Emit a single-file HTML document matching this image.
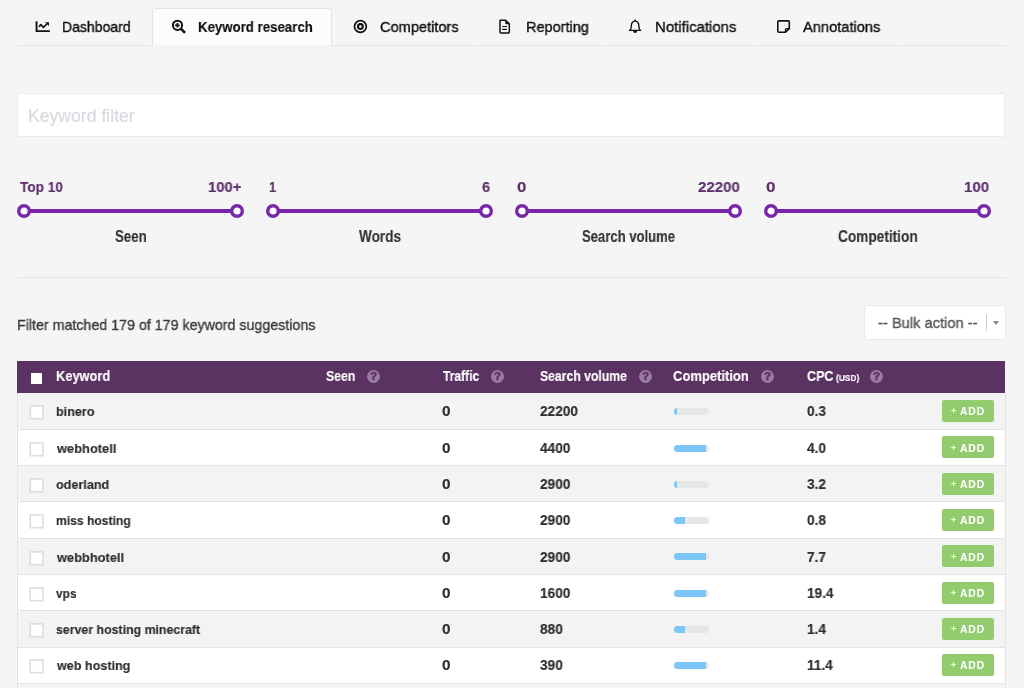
<!DOCTYPE html>
<html><head><meta charset="utf-8"><style>
*{margin:0;padding:0;box-sizing:content-box}
html,body{width:1024px;height:688px;overflow:hidden;background:#f5f5f5;font-family:"Liberation Sans",sans-serif}
.abs{position:absolute}
.t{position:absolute;white-space:nowrap;transform-origin:0 0;will-change:transform}
.tabact{position:absolute;left:152px;top:8px;width:178px;height:36px;background:#fcfcfc;border:1px solid #e6e3e8;border-bottom:none;border-radius:3px 3px 0 0}
.knob{width:7px;height:7px;border:3.5px solid #7628a8;border-radius:50%;background:#fff}
.q{width:13px;height:13px;border-radius:50%;background:#9a7ba1;color:#5b3363;font:bold 11px/13px "Liberation Sans",sans-serif;text-align:center;will-change:transform;-webkit-text-stroke:0.6px #5b3363}
.cb{width:12px;height:12px;border:1px solid #dcdadd;background:#fff}
.bar{width:35.5px;height:7px;border-radius:3.5px;background:#e6e6e6;overflow:hidden}
.bar div{height:7px;background:#7cc5f7}
.add{width:52px;height:22px;border-radius:2px;background:#92cc6e}
</style></head>
<body>
<div class="tabact"></div>
<div class="abs" style="left:17px;top:45px;width:131px;height:1px;background:#e6e3e8"></div>
<div class="abs" style="left:149px;top:45px;width:4px;height:1px;background:#e6e3e8"></div>
<div class="abs" style="left:331px;top:45px;width:145px;height:1px;background:#e6e3e8"></div>
<div class="abs" style="left:477px;top:45px;width:128px;height:1px;background:#e6e3e8"></div>
<div class="abs" style="left:606px;top:45px;width:148px;height:1px;background:#e6e3e8"></div>
<div class="abs" style="left:755px;top:45px;width:142px;height:1px;background:#e6e3e8"></div>
<div class="abs" style="left:898px;top:45px;width:108px;height:1px;background:#e6e3e8"></div>
<div class="t" style="left:62.05px;top:19px;font-size:15.12px;line-height:15.12px;font-weight:400;color:#0e0e0e;transform:scaleX(0.9283);-webkit-text-stroke:0.35px #0e0e0e;">Dashboard</div>
<div class="t" style="left:198.03px;top:19px;font-size:15.12px;line-height:15.12px;font-weight:700;color:#0e0e0e;transform:scaleX(0.8759);-webkit-text-stroke:0.15px #0e0e0e;">Keyword research</div>
<div class="t" style="left:379.77px;top:19px;font-size:15.12px;line-height:15.12px;font-weight:400;color:#0e0e0e;transform:scaleX(0.9654);-webkit-text-stroke:0.35px #0e0e0e;">Competitors</div>
<div class="t" style="left:525.51px;top:19px;font-size:15.12px;line-height:15.12px;font-weight:400;color:#0e0e0e;transform:scaleX(0.9599);-webkit-text-stroke:0.35px #0e0e0e;">Reporting</div>
<div class="t" style="left:654.77px;top:19px;font-size:15.12px;line-height:15.12px;font-weight:400;color:#0e0e0e;transform:scaleX(0.9896);-webkit-text-stroke:0.35px #0e0e0e;">Notifications</div>
<div class="t" style="left:802.97px;top:19px;font-size:15.12px;line-height:15.12px;font-weight:400;color:#0e0e0e;transform:scaleX(0.9688);-webkit-text-stroke:0.35px #0e0e0e;">Annotations</div>
<svg class="abs" style="left:35px;top:20px" width="16" height="14" viewBox="0 0 16 14">
<path d="M1.55 1.2 V11.1 H14.9" fill="none" stroke="#111" stroke-width="1.9"/>
<path d="M3.9 6.7 L5.8 4.6 L8.4 7.3 L11.8 4" fill="none" stroke="#111" stroke-width="1.7" stroke-linejoin="round"/>
<path d="M9.8 2.2 H14 V6.1 Z" fill="#111"/></svg>
<svg class="abs" style="left:171px;top:19px" width="16" height="16" viewBox="0 0 16 16">
<circle cx="6.5" cy="6.3" r="4.6" fill="none" stroke="#111" stroke-width="2"/>
<path d="M9.9 9.6 L14 13.8" stroke="#111" stroke-width="2.6" stroke-linecap="butt"/>
<path d="M6.4 4V8.6M4.1 6.3H8.7" stroke="#111" stroke-width="1.7"/></svg>
<svg class="abs" style="left:352px;top:19px" width="16" height="16" viewBox="0 0 16 16">
<circle cx="8.4" cy="7.5" r="5.9" fill="none" stroke="#111" stroke-width="1.7"/>
<circle cx="8.4" cy="7.5" r="2.4" fill="none" stroke="#111" stroke-width="2.1"/></svg>
<svg class="abs" style="left:497px;top:18px" width="16" height="17" viewBox="0 0 16 17">
<path d="M3 2.2 H8.6 L12.3 5.9 V14.1 Q12.3 15.1 11.3 15.1 H4 Q3 15.1 3 14.1 V3.2 Q3 2.2 4 2.2Z" fill="none" stroke="#111" stroke-width="1.5" stroke-linejoin="round"/>
<path d="M8.3 2.2 L12.3 6.2 H9.2 Q8.3 6.2 8.3 5.3Z" fill="#111"/>
<path d="M5.2 8.5H9.9M5.2 11.3H9.9" stroke="#111" stroke-width="1.2"/></svg>
<svg class="abs" style="left:627px;top:18px" width="16" height="17" viewBox="0 0 16 17">
<path d="M2.6 12.4 Q4.3 11.6 4.3 8.5 Q4.3 3.1 8.1 3.1 Q11.9 3.1 11.9 8.5 Q11.9 11.6 13.6 12.4 Z" fill="none" stroke="#111" stroke-width="1.4" stroke-linejoin="round"/>
<circle cx="8.1" cy="2.4" r="1" fill="#111"/>
<path d="M6.1 13.1 H10.1 A2 2 0 0 1 6.1 13.1Z" fill="#111"/></svg>
<svg class="abs" style="left:776px;top:19px" width="16" height="16" viewBox="0 0 16 16">
<path d="M2.9 1.9 H12.2 Q13.3 1.9 13.3 3 V9.6 L9.5 13.2 H2.9 Q1.8 13.2 1.8 12.1 V3 Q1.8 1.9 2.9 1.9Z" fill="none" stroke="#111" stroke-width="1.6" stroke-linejoin="round"/>
<path d="M13.3 9.6 H10.5 Q9.5 9.6 9.5 10.6 V13.2" fill="none" stroke="#111" stroke-width="1.4"/></svg>
<div class="abs" style="left:17px;top:93px;width:986px;height:42px;background:#fff;border:1px solid #ebe9ed;border-radius:2px"></div>
<div class="t" style="left:27.95px;top:108px;font-size:17.59px;line-height:17.59px;font-weight:400;color:#dbd8df;transform:scaleX(1.0021);-webkit-text-stroke:0.2px #dbd8df;">Keyword filter</div>
<div class="abs" style="left:24px;top:209px;width:213px;height:4px;background:#7628a8"></div>
<svg class="abs" style="left:17px;top:204px" width="14" height="14" viewBox="0 0 14 14"><circle cx="7" cy="7" r="5.3" fill="#fff" stroke="#7628a8" stroke-width="3.4"/></svg>
<svg class="abs" style="left:230px;top:204px" width="14" height="14" viewBox="0 0 14 14"><circle cx="7" cy="7" r="5.3" fill="#fff" stroke="#7628a8" stroke-width="3.4"/></svg>
<div class="abs" style="left:273px;top:209px;width:213px;height:4px;background:#7628a8"></div>
<svg class="abs" style="left:266px;top:204px" width="14" height="14" viewBox="0 0 14 14"><circle cx="7" cy="7" r="5.3" fill="#fff" stroke="#7628a8" stroke-width="3.4"/></svg>
<svg class="abs" style="left:479px;top:204px" width="14" height="14" viewBox="0 0 14 14"><circle cx="7" cy="7" r="5.3" fill="#fff" stroke="#7628a8" stroke-width="3.4"/></svg>
<div class="abs" style="left:522px;top:209px;width:213px;height:4px;background:#7628a8"></div>
<svg class="abs" style="left:515px;top:204px" width="14" height="14" viewBox="0 0 14 14"><circle cx="7" cy="7" r="5.3" fill="#fff" stroke="#7628a8" stroke-width="3.4"/></svg>
<svg class="abs" style="left:728px;top:204px" width="14" height="14" viewBox="0 0 14 14"><circle cx="7" cy="7" r="5.3" fill="#fff" stroke="#7628a8" stroke-width="3.4"/></svg>
<div class="abs" style="left:771px;top:209px;width:213px;height:4px;background:#7628a8"></div>
<svg class="abs" style="left:764px;top:204px" width="14" height="14" viewBox="0 0 14 14"><circle cx="7" cy="7" r="5.3" fill="#fff" stroke="#7628a8" stroke-width="3.4"/></svg>
<svg class="abs" style="left:977px;top:204px" width="14" height="14" viewBox="0 0 14 14"><circle cx="7" cy="7" r="5.3" fill="#fff" stroke="#7628a8" stroke-width="3.4"/></svg>
<div class="t" style="left:20.09px;top:179px;font-size:15.26px;line-height:15.26px;font-weight:700;color:#5c2f6a;transform:scaleX(0.8942);-webkit-text-stroke:0.15px #5c2f6a;">Top 10</div>
<div class="t" style="left:208.48px;top:179px;font-size:15.26px;line-height:15.26px;font-weight:700;color:#5c2f6a;transform:scaleX(0.9707);-webkit-text-stroke:0.15px #5c2f6a;">100+</div>
<div class="t" style="left:269.20px;top:179px;font-size:15.26px;line-height:15.26px;font-weight:700;color:#5c2f6a;transform:scaleX(0.8437);-webkit-text-stroke:0.15px #5c2f6a;">1</div>
<div class="t" style="left:482.48px;top:179px;font-size:15.26px;line-height:15.26px;font-weight:700;color:#5c2f6a;transform:scaleX(0.9477);-webkit-text-stroke:0.15px #5c2f6a;">6</div>
<div class="t" style="left:517.33px;top:179px;font-size:15.26px;line-height:15.26px;font-weight:700;color:#5c2f6a;transform:scaleX(1.1012);-webkit-text-stroke:0.15px #5c2f6a;">0</div>
<div class="t" style="left:698.24px;top:179px;font-size:15.26px;line-height:15.26px;font-weight:700;color:#5c2f6a;transform:scaleX(0.9843);-webkit-text-stroke:0.15px #5c2f6a;">22200</div>
<div class="t" style="left:766.22px;top:179px;font-size:15.26px;line-height:15.26px;font-weight:700;color:#5c2f6a;transform:scaleX(1.1150);-webkit-text-stroke:0.15px #5c2f6a;">0</div>
<div class="t" style="left:964.07px;top:179px;font-size:15.26px;line-height:15.26px;font-weight:700;color:#5c2f6a;transform:scaleX(0.9833);-webkit-text-stroke:0.15px #5c2f6a;">100</div>
<div class="t" style="left:114.90px;top:229px;font-size:15.84px;line-height:15.84px;font-weight:700;color:#333;transform:scaleX(0.8377);-webkit-text-stroke:0.15px #333;">Seen</div>
<div class="t" style="left:358.72px;top:229px;font-size:15.84px;line-height:15.84px;font-weight:700;color:#333;transform:scaleX(0.8578);-webkit-text-stroke:0.15px #333;">Words</div>
<div class="t" style="left:582.11px;top:229px;font-size:15.84px;line-height:15.84px;font-weight:700;color:#333;transform:scaleX(0.8259);-webkit-text-stroke:0.15px #333;">Search volume</div>
<div class="t" style="left:838.03px;top:229px;font-size:15.84px;line-height:15.84px;font-weight:700;color:#333;transform:scaleX(0.8628);-webkit-text-stroke:0.15px #333;">Competition</div>
<div class="abs" style="left:17px;top:277px;width:989px;height:1px;background:#e6e3e8"></div>
<div class="t" style="left:16.58px;top:318px;font-size:14.97px;line-height:14.97px;font-weight:400;color:#3a3a3a;transform:scaleX(0.9512);-webkit-text-stroke:0.35px #3a3a3a;">Filter matched 179 of 179 keyword suggestions</div>
<div class="abs" style="left:864px;top:305px;width:140px;height:33px;background:#fff;border:1px solid #ebe9ed;border-radius:3px"></div>
<div class="t" style="left:878.25px;top:316px;font-size:14.97px;line-height:14.97px;font-weight:400;color:#555;transform:scaleX(0.9805);-webkit-text-stroke:0.35px #555;">-- Bulk action --</div>
<div class="abs" style="left:986px;top:314px;width:1px;height:17px;background:#ccc"></div>
<div class="abs" style="left:993px;top:321px;width:0;height:0;border-left:3px solid transparent;border-right:3px solid transparent;border-top:4px solid #888"></div>
<div class="abs" style="left:17px;top:361px;width:988px;height:32px;background:#5b3363"></div>
<div class="abs" style="left:31px;top:373px;width:11px;height:11px;background:#fff"></div>
<div class="t" style="left:55.65px;top:369px;font-size:14.39px;line-height:14.39px;font-weight:700;color:#fff;transform:scaleX(0.8921);-webkit-text-stroke:0.15px #fff;">Keyword</div>
<div class="t" style="left:326.03px;top:369px;font-size:14.39px;line-height:14.39px;font-weight:700;color:#fff;transform:scaleX(0.8558);-webkit-text-stroke:0.15px #fff;">Seen</div>
<div class="t" style="left:442.76px;top:369px;font-size:14.39px;line-height:14.39px;font-weight:700;color:#fff;transform:scaleX(0.8387);-webkit-text-stroke:0.15px #fff;">Traffic</div>
<div class="t" style="left:539.88px;top:369px;font-size:14.39px;line-height:14.39px;font-weight:700;color:#fff;transform:scaleX(0.8492);-webkit-text-stroke:0.15px #fff;">Search volume</div>
<div class="t" style="left:673.15px;top:369px;font-size:14.39px;line-height:14.39px;font-weight:700;color:#fff;transform:scaleX(0.9039);-webkit-text-stroke:0.15px #fff;">Competition</div>
<div class="t" style="left:807.27px;top:369px;font-size:14.39px;line-height:14.39px;font-weight:700;color:#fff;transform:scaleX(0.8712);-webkit-text-stroke:0.15px #fff;">CPC</div>
<div class="t" style="left:836.38px;top:373px;font-size:9.59px;line-height:9.59px;font-weight:700;color:#fff;transform:scaleX(0.8719);-webkit-text-stroke:0.15px #fff;">(USD)</div>
<div class="abs q" style="left:367.4px;top:370px">?</div>
<div class="abs q" style="left:491.0px;top:370px">?</div>
<div class="abs q" style="left:639.0px;top:370px">?</div>
<div class="abs q" style="left:760.7px;top:370px">?</div>
<div class="abs q" style="left:870.4px;top:370px">?</div>
<div class="abs" style="left:17px;top:393.30px;width:989px;height:36.28px;background:#f3f3f4"></div>
<div class="abs" style="left:17px;top:429px;width:989px;height:1px;background:#e4e1e7;z-index:2"></div>
<svg class="abs" style="left:29px;top:404.5px" width="16" height="16" viewBox="0 0 16 16"><rect x="1.3" y="0.9" width="12.6" height="12.8" fill="#fff" stroke="#dddcdf" stroke-width="1.6"/></svg>
<div class="t" style="left:55.67px;top:405px;font-size:13.66px;line-height:13.66px;font-weight:700;color:#2d2d2d;transform:scaleX(0.9205);-webkit-text-stroke:0.15px #2d2d2d;">binero</div>
<div class="t" style="left:441.69px;top:404px;font-size:14.10px;line-height:14.10px;font-weight:700;color:#2d2d2d;transform:scaleX(1.0878);-webkit-text-stroke:0.15px #2d2d2d;">0</div>
<div class="t" style="left:540.04px;top:404px;font-size:14.10px;line-height:14.10px;font-weight:700;color:#2d2d2d;transform:scaleX(0.9700);-webkit-text-stroke:0.15px #2d2d2d;">22200</div>
<div class="t" style="left:806.85px;top:404px;font-size:14.10px;line-height:14.10px;font-weight:700;color:#2d2d2d;transform:scaleX(0.9700);-webkit-text-stroke:0.15px #2d2d2d;">0.3</div>
<div class="abs bar" style="left:673.5px;top:408.30px"><div style="width:3.0px"></div></div>
<div class="abs add" style="left:942px;top:400px"></div>
<div class="t" style="left:960.23px;top:407px;font-size:10.17px;line-height:10.17px;font-weight:700;color:#fff;transform:scaleX(1.0153);-webkit-text-stroke:0.05px #fff;letter-spacing:0.9px;">ADD</div>
<div class="t" style="left:950.92px;top:408px;font-size:8.14px;line-height:8.14px;font-weight:700;color:#fff;transform:scaleX(1.1013);-webkit-text-stroke:0px #fff;">+</div>
<div class="abs" style="left:17px;top:429.58px;width:989px;height:36.28px;background:#fff"></div>
<div class="abs" style="left:17px;top:465px;width:989px;height:1px;background:#e4e1e7;z-index:2"></div>
<svg class="abs" style="left:29px;top:441.5px" width="16" height="16" viewBox="0 0 16 16"><rect x="1.3" y="0.9" width="12.6" height="12.8" fill="#fff" stroke="#dddcdf" stroke-width="1.6"/></svg>
<div class="t" style="left:56.53px;top:442px;font-size:13.66px;line-height:13.66px;font-weight:700;color:#2d2d2d;transform:scaleX(0.9423);-webkit-text-stroke:0.15px #2d2d2d;">webhotell</div>
<div class="t" style="left:441.69px;top:441px;font-size:14.10px;line-height:14.10px;font-weight:700;color:#2d2d2d;transform:scaleX(1.0878);-webkit-text-stroke:0.15px #2d2d2d;">0</div>
<div class="t" style="left:540.28px;top:441px;font-size:14.10px;line-height:14.10px;font-weight:700;color:#2d2d2d;transform:scaleX(0.9700);-webkit-text-stroke:0.15px #2d2d2d;">4400</div>
<div class="t" style="left:807.18px;top:441px;font-size:14.10px;line-height:14.10px;font-weight:700;color:#2d2d2d;transform:scaleX(0.9700);-webkit-text-stroke:0.15px #2d2d2d;">4.0</div>
<div class="abs bar" style="left:673.5px;top:444.58px"><div style="width:32.0px"></div></div>
<div class="abs add" style="left:942px;top:436px"></div>
<div class="t" style="left:960.23px;top:444px;font-size:10.17px;line-height:10.17px;font-weight:700;color:#fff;transform:scaleX(1.0153);-webkit-text-stroke:0.05px #fff;letter-spacing:0.9px;">ADD</div>
<div class="t" style="left:950.92px;top:445px;font-size:8.14px;line-height:8.14px;font-weight:700;color:#fff;transform:scaleX(1.1013);-webkit-text-stroke:0px #fff;">+</div>
<div class="abs" style="left:17px;top:465.86px;width:989px;height:36.28px;background:#f3f3f4"></div>
<div class="abs" style="left:17px;top:501px;width:989px;height:1px;background:#e4e1e7;z-index:2"></div>
<svg class="abs" style="left:29px;top:477.5px" width="16" height="16" viewBox="0 0 16 16"><rect x="1.3" y="0.9" width="12.6" height="12.8" fill="#fff" stroke="#dddcdf" stroke-width="1.6"/></svg>
<div class="t" style="left:56.00px;top:478px;font-size:13.66px;line-height:13.66px;font-weight:700;color:#2d2d2d;transform:scaleX(0.9229);-webkit-text-stroke:0.15px #2d2d2d;">oderland</div>
<div class="t" style="left:441.69px;top:477px;font-size:14.10px;line-height:14.10px;font-weight:700;color:#2d2d2d;transform:scaleX(1.0878);-webkit-text-stroke:0.15px #2d2d2d;">0</div>
<div class="t" style="left:540.04px;top:477px;font-size:14.10px;line-height:14.10px;font-weight:700;color:#2d2d2d;transform:scaleX(0.9700);-webkit-text-stroke:0.15px #2d2d2d;">2900</div>
<div class="t" style="left:807.07px;top:477px;font-size:14.10px;line-height:14.10px;font-weight:700;color:#2d2d2d;transform:scaleX(0.9700);-webkit-text-stroke:0.15px #2d2d2d;">3.2</div>
<div class="abs bar" style="left:673.5px;top:480.86px"><div style="width:3.0px"></div></div>
<div class="abs add" style="left:942px;top:473px"></div>
<div class="t" style="left:960.23px;top:480px;font-size:10.17px;line-height:10.17px;font-weight:700;color:#fff;transform:scaleX(1.0153);-webkit-text-stroke:0.05px #fff;letter-spacing:0.9px;">ADD</div>
<div class="t" style="left:950.92px;top:481px;font-size:8.14px;line-height:8.14px;font-weight:700;color:#fff;transform:scaleX(1.1013);-webkit-text-stroke:0px #fff;">+</div>
<div class="abs" style="left:17px;top:502.14px;width:989px;height:36.28px;background:#fff"></div>
<div class="abs" style="left:17px;top:538px;width:989px;height:1px;background:#e4e1e7;z-index:2"></div>
<svg class="abs" style="left:29px;top:513.5px" width="16" height="16" viewBox="0 0 16 16"><rect x="1.3" y="0.9" width="12.6" height="12.8" fill="#fff" stroke="#dddcdf" stroke-width="1.6"/></svg>
<div class="t" style="left:55.70px;top:514px;font-size:13.66px;line-height:13.66px;font-weight:700;color:#2d2d2d;transform:scaleX(0.8867);-webkit-text-stroke:0.15px #2d2d2d;">miss hosting</div>
<div class="t" style="left:441.69px;top:513px;font-size:14.10px;line-height:14.10px;font-weight:700;color:#2d2d2d;transform:scaleX(1.0878);-webkit-text-stroke:0.15px #2d2d2d;">0</div>
<div class="t" style="left:540.04px;top:513px;font-size:14.10px;line-height:14.10px;font-weight:700;color:#2d2d2d;transform:scaleX(0.9700);-webkit-text-stroke:0.15px #2d2d2d;">2900</div>
<div class="t" style="left:806.85px;top:513px;font-size:14.10px;line-height:14.10px;font-weight:700;color:#2d2d2d;transform:scaleX(0.9700);-webkit-text-stroke:0.15px #2d2d2d;">0.8</div>
<div class="abs bar" style="left:673.5px;top:517.14px"><div style="width:11.9px"></div></div>
<div class="abs add" style="left:942px;top:509px"></div>
<div class="t" style="left:960.23px;top:516px;font-size:10.17px;line-height:10.17px;font-weight:700;color:#fff;transform:scaleX(1.0153);-webkit-text-stroke:0.05px #fff;letter-spacing:0.9px;">ADD</div>
<div class="t" style="left:950.92px;top:517px;font-size:8.14px;line-height:8.14px;font-weight:700;color:#fff;transform:scaleX(1.1013);-webkit-text-stroke:0px #fff;">+</div>
<div class="abs" style="left:17px;top:538.42px;width:989px;height:36.28px;background:#f3f3f4"></div>
<div class="abs" style="left:17px;top:574px;width:989px;height:1px;background:#e4e1e7;z-index:2"></div>
<svg class="abs" style="left:29px;top:550.5px" width="16" height="16" viewBox="0 0 16 16"><rect x="1.3" y="0.9" width="12.6" height="12.8" fill="#fff" stroke="#dddcdf" stroke-width="1.6"/></svg>
<div class="t" style="left:56.53px;top:551px;font-size:13.66px;line-height:13.66px;font-weight:700;color:#2d2d2d;transform:scaleX(0.9401);-webkit-text-stroke:0.15px #2d2d2d;">webbhotell</div>
<div class="t" style="left:441.69px;top:550px;font-size:14.10px;line-height:14.10px;font-weight:700;color:#2d2d2d;transform:scaleX(1.0878);-webkit-text-stroke:0.15px #2d2d2d;">0</div>
<div class="t" style="left:540.04px;top:550px;font-size:14.10px;line-height:14.10px;font-weight:700;color:#2d2d2d;transform:scaleX(0.9700);-webkit-text-stroke:0.15px #2d2d2d;">2900</div>
<div class="t" style="left:806.83px;top:550px;font-size:14.10px;line-height:14.10px;font-weight:700;color:#2d2d2d;transform:scaleX(0.9700);-webkit-text-stroke:0.15px #2d2d2d;">7.7</div>
<div class="abs bar" style="left:673.5px;top:553.42px"><div style="width:32.4px"></div></div>
<div class="abs add" style="left:942px;top:545px"></div>
<div class="t" style="left:960.23px;top:553px;font-size:10.17px;line-height:10.17px;font-weight:700;color:#fff;transform:scaleX(1.0153);-webkit-text-stroke:0.05px #fff;letter-spacing:0.9px;">ADD</div>
<div class="t" style="left:950.92px;top:554px;font-size:8.14px;line-height:8.14px;font-weight:700;color:#fff;transform:scaleX(1.1013);-webkit-text-stroke:0px #fff;">+</div>
<div class="abs" style="left:17px;top:574.70px;width:989px;height:36.28px;background:#fff"></div>
<div class="abs" style="left:17px;top:610px;width:989px;height:1px;background:#e4e1e7;z-index:2"></div>
<svg class="abs" style="left:29px;top:586.5px" width="16" height="16" viewBox="0 0 16 16"><rect x="1.3" y="0.9" width="12.6" height="12.8" fill="#fff" stroke="#dddcdf" stroke-width="1.6"/></svg>
<div class="t" style="left:56.45px;top:587px;font-size:13.66px;line-height:13.66px;font-weight:700;color:#2d2d2d;transform:scaleX(0.8713);-webkit-text-stroke:0.15px #2d2d2d;">vps</div>
<div class="t" style="left:441.69px;top:586px;font-size:14.10px;line-height:14.10px;font-weight:700;color:#2d2d2d;transform:scaleX(1.0878);-webkit-text-stroke:0.15px #2d2d2d;">0</div>
<div class="t" style="left:539.65px;top:586px;font-size:14.10px;line-height:14.10px;font-weight:700;color:#2d2d2d;transform:scaleX(0.9700);-webkit-text-stroke:0.15px #2d2d2d;">1600</div>
<div class="t" style="left:806.55px;top:586px;font-size:14.10px;line-height:14.10px;font-weight:700;color:#2d2d2d;transform:scaleX(0.9700);-webkit-text-stroke:0.15px #2d2d2d;">19.4</div>
<div class="abs bar" style="left:673.5px;top:589.70px"><div style="width:32.4px"></div></div>
<div class="abs add" style="left:942px;top:582px"></div>
<div class="t" style="left:960.23px;top:589px;font-size:10.17px;line-height:10.17px;font-weight:700;color:#fff;transform:scaleX(1.0153);-webkit-text-stroke:0.05px #fff;letter-spacing:0.9px;">ADD</div>
<div class="t" style="left:950.92px;top:590px;font-size:8.14px;line-height:8.14px;font-weight:700;color:#fff;transform:scaleX(1.1013);-webkit-text-stroke:0px #fff;">+</div>
<div class="abs" style="left:17px;top:610.98px;width:989px;height:36.28px;background:#f3f3f4"></div>
<div class="abs" style="left:17px;top:647px;width:989px;height:1px;background:#e4e1e7;z-index:2"></div>
<svg class="abs" style="left:29px;top:622.5px" width="16" height="16" viewBox="0 0 16 16"><rect x="1.3" y="0.9" width="12.6" height="12.8" fill="#fff" stroke="#dddcdf" stroke-width="1.6"/></svg>
<div class="t" style="left:56.06px;top:623px;font-size:13.66px;line-height:13.66px;font-weight:700;color:#2d2d2d;transform:scaleX(0.9043);-webkit-text-stroke:0.15px #2d2d2d;">server hosting minecraft</div>
<div class="t" style="left:441.69px;top:622px;font-size:14.10px;line-height:14.10px;font-weight:700;color:#2d2d2d;transform:scaleX(1.0878);-webkit-text-stroke:0.15px #2d2d2d;">0</div>
<div class="t" style="left:540.06px;top:622px;font-size:14.10px;line-height:14.10px;font-weight:700;color:#2d2d2d;transform:scaleX(0.9700);-webkit-text-stroke:0.15px #2d2d2d;">880</div>
<div class="t" style="left:806.55px;top:622px;font-size:14.10px;line-height:14.10px;font-weight:700;color:#2d2d2d;transform:scaleX(0.9700);-webkit-text-stroke:0.15px #2d2d2d;">1.4</div>
<div class="abs bar" style="left:673.5px;top:625.98px"><div style="width:11.9px"></div></div>
<div class="abs add" style="left:942px;top:618px"></div>
<div class="t" style="left:960.23px;top:625px;font-size:10.17px;line-height:10.17px;font-weight:700;color:#fff;transform:scaleX(1.0153);-webkit-text-stroke:0.05px #fff;letter-spacing:0.9px;">ADD</div>
<div class="t" style="left:950.92px;top:626px;font-size:8.14px;line-height:8.14px;font-weight:700;color:#fff;transform:scaleX(1.1013);-webkit-text-stroke:0px #fff;">+</div>
<div class="abs" style="left:17px;top:647.26px;width:989px;height:36.28px;background:#fff"></div>
<div class="abs" style="left:17px;top:683px;width:989px;height:1px;background:#e4e1e7;z-index:2"></div>
<svg class="abs" style="left:29px;top:658.5px" width="16" height="16" viewBox="0 0 16 16"><rect x="1.3" y="0.9" width="12.6" height="12.8" fill="#fff" stroke="#dddcdf" stroke-width="1.6"/></svg>
<div class="t" style="left:56.53px;top:659px;font-size:13.66px;line-height:13.66px;font-weight:700;color:#2d2d2d;transform:scaleX(0.9212);-webkit-text-stroke:0.15px #2d2d2d;">web hosting</div>
<div class="t" style="left:441.69px;top:658px;font-size:14.10px;line-height:14.10px;font-weight:700;color:#2d2d2d;transform:scaleX(1.0878);-webkit-text-stroke:0.15px #2d2d2d;">0</div>
<div class="t" style="left:540.17px;top:658px;font-size:14.10px;line-height:14.10px;font-weight:700;color:#2d2d2d;transform:scaleX(0.9700);-webkit-text-stroke:0.15px #2d2d2d;">390</div>
<div class="t" style="left:806.55px;top:658px;font-size:14.10px;line-height:14.10px;font-weight:700;color:#2d2d2d;transform:scaleX(0.9700);-webkit-text-stroke:0.15px #2d2d2d;">11.4</div>
<div class="abs bar" style="left:673.5px;top:662.26px"><div style="width:32.4px"></div></div>
<div class="abs add" style="left:942px;top:654px"></div>
<div class="t" style="left:960.23px;top:661px;font-size:10.17px;line-height:10.17px;font-weight:700;color:#fff;transform:scaleX(1.0153);-webkit-text-stroke:0.05px #fff;letter-spacing:0.9px;">ADD</div>
<div class="t" style="left:950.92px;top:662px;font-size:8.14px;line-height:8.14px;font-weight:700;color:#fff;transform:scaleX(1.1013);-webkit-text-stroke:0px #fff;">+</div>
<div class="abs" style="left:17px;top:683.24px;width:989px;height:10px;background:#f3f3f4"></div>
<div class="abs" style="left:17px;top:393px;width:1px;height:295px;background:#e4e1e7"></div>
<div class="abs" style="left:1005px;top:393px;width:1px;height:295px;background:#e4e1e7"></div>
</body></html>
